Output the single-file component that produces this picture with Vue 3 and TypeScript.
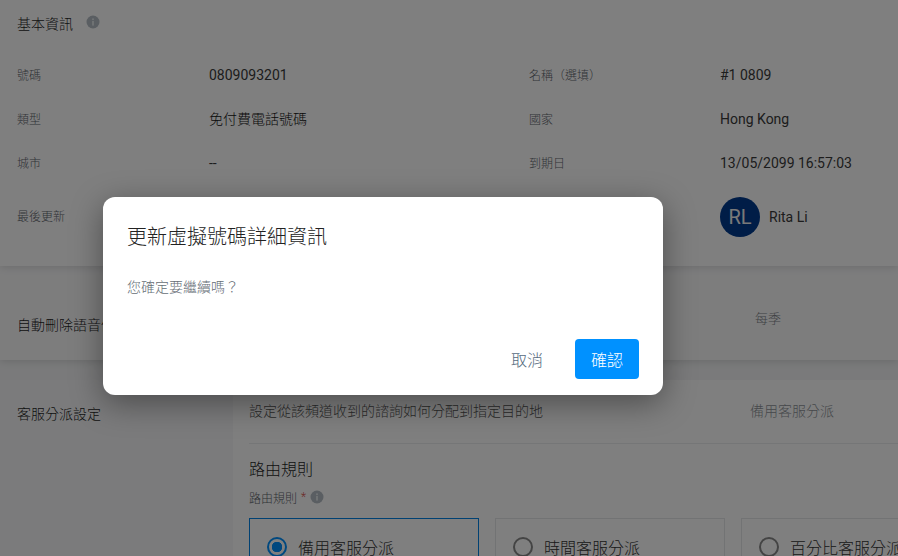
<script setup lang="ts">
interface InfoRow {
  label: string
  value: string
  label2: string
  value2: string
}
const rows: InfoRow[] = [
  { label: '號碼', value: '0809093201', label2: '名稱（選填）', value2: '#1 0809' },
  { label: '類型', value: '免付費電話號碼', label2: '國家', value2: 'Hong Kong' },
  { label: '城市', value: '--', label2: '到期日', value2: '13/05/2099 16:57:03' }
]
const options: { text: string; active: boolean }[] = [
  { text: '備用客服分派', active: true },
  { text: '時間客服分派', active: false },
  { text: '百分比客服分派', active: false }
]
const isCjk = (s: string): boolean => /[\u4e00-\u9fff]/.test(s)
</script>

<template>
  <div class="page">
    <section class="info">
      <div class="info-head">
        <h2>基本資訊</h2>
        <svg class="tip" viewBox="0 0 14 14" width="14" height="14"><circle cx="7" cy="7" r="6.5" fill="#b4bcc4" /><rect x="6.1" y="6" width="1.8" height="4.6" fill="#e4e8ec" /><rect x="6.1" y="3.4" width="1.8" height="1.7" fill="#e4e8ec" /></svg>
      </div>
      <div v-for="r in rows" :key="r.label" class="row">
        <span class="label">{{ r.label }}</span>
        <span class="value" :class="{ cjk: isCjk(r.value) }">{{ r.value }}</span>
        <span class="label">{{ r.label2 }}</span>
        <span class="value">{{ r.value2 }}</span>
      </div>
      <div class="row row-user">
        <span class="label updated">最後更新</span>
        <span class="value"></span>
        <span class="label"></span>
        <span class="user"><span class="avatar">RL</span><span class="value">Rita Li</span></span>
      </div>
    </section>

    <section class="band">
      <span class="band-title">自動刪除語音信箱</span>
      <span class="band-value">每季</span>
    </section>

    <section class="dispatch">
      <div class="side">客服分派設定</div>
      <div class="panel">
        <div class="desc">
          <span class="desc-text">設定從該頻道收到的諮詢如何分配到指定目的地</span>
          <span class="desc-value">備用客服分派</span>
        </div>
        <h3>路由規則</h3>
        <div class="field">
          路由規則 <i>*</i>
          <svg class="tip" viewBox="0 0 14 14" width="14" height="14"><circle cx="7" cy="7" r="6.5" fill="#b4bcc4" /><rect x="6.1" y="6" width="1.8" height="4.6" fill="#e4e8ec" /><rect x="6.1" y="3.4" width="1.8" height="1.7" fill="#e4e8ec" /></svg>
        </div>
        <div class="options">
          <div v-for="o in options" :key="o.text" class="option" :class="{ on: o.active }">
            <span class="radio"></span>
            <span>{{ o.text }}</span>
          </div>
        </div>
      </div>
    </section>

    <div class="overlay">
      <div class="dialog">
        <div class="title">更新虛擬號碼詳細資訊</div>
        <p class="msg">您確定要繼續嗎？</p>
        <div class="actions">
          <button class="cancel">取消</button>
          <button class="ok">確認</button>
        </div>
      </div>
    </div>
  </div>
</template>

<style scoped>
.page {
  position: relative;
  width: 898px;
  height: 556px;
  overflow: hidden;
  background: #f4f5f6;
  font-family: Roboto, "Noto Sans CJK TC", sans-serif;
  font-size: 14px;
  color: #333;
  text-spacing-trim: space-all;
}
.info {
  position: relative;
  z-index: 2;
  height: 266px;
  padding-left: 17px;
  box-sizing: border-box;
  background: #fff;
  box-shadow: 0 1px 8px rgba(0, 0, 0, 0.14);
}
.info-head {
  display: flex;
  align-items: center;
  gap: 13px;
  height: 53px;
  padding-bottom: 8px;
  box-sizing: border-box;
}
.info-head .tip {
  margin-top: -1px;
}
h2 {
  margin: 0;
  font-size: 14px;
  font-weight: 300;
  color: #1f1f1f;
}
.row {
  display: grid;
  grid-template-columns: 192px 320px 191px 1fr;
  align-items: center;
  height: 44px;
}
.row-user {
  height: 44px;
  margin-top: 10px;
}
.label {
  margin-top: -2px;
  font-size: 12px;
  font-weight: 300;
  color: #5f666d;
}
.updated {
  align-self: center;
  margin-top: -4px;
}
.value {
  font-size: 14px;
  color: #3a3a3a;
}
.value.cjk {
  margin-top: -2px;
  font-weight: 300;
  color: #111;
}
.user {
  display: flex;
  align-items: center;
  gap: 9px;
}
.avatar {
  display: flex;
  align-items: center;
  justify-content: center;
  width: 40px;
  height: 40px;
  border-radius: 50%;
  background: #003a8f;
  color: #f2f2f2;
  font-size: 20px;
}
.band {
  position: relative;
  z-index: 1;
  display: flex;
  align-items: center;
  height: 94px;
  padding-left: 17px;
  box-sizing: border-box;
  margin-bottom: 20px;
  background: #fafafb;
  box-shadow: 0 1px 8px rgba(0, 0, 0, 0.14);
  font-weight: 300;
}
.band-title {
  width: 738px;
  padding-top: 21px;
  color: #1f1f1f;
}
.band-value {
  margin-top: 8px;
  font-size: 13px;
  color: #808489;
}
.dispatch {
  display: flex;
  background: #f6f7f8;
  font-weight: 300;
}
.side {
  width: 233px;
  flex: none;
  padding: 23px 0 0 17px;
  box-sizing: border-box;
  color: #1f1f1f;
}
.panel {
  flex: 1;
  min-width: 0;
  padding: 0 0 0 16px;
  background: #fff;
}
.desc {
  display: flex;
  height: 64px;
  padding-top: 20px;
  box-sizing: border-box;
  border-bottom: 1px solid #eaecee;
  color: #555;
}
.desc-text {
  width: 501px;
}
.desc-value {
  color: #8e9398;
}
h3 {
  margin: 14px 0 0;
  font-size: 16px;
  line-height: 24px;
  font-weight: 300;
  color: #1f1f1f;
}
.field {
  display: flex;
  align-items: center;
  gap: 4px;
  margin-top: 6px;
  height: 18px;
  font-size: 12px;
  color: #5f666d;
}
.field i {
  font-style: normal;
  color: #d9534f;
}
.options {
  display: flex;
  gap: 16px;
  margin-top: 12px;
}
.option {
  flex: none;
  display: flex;
  align-items: center;
  gap: 11px;
  width: 230px;
  height: 56px;
  padding: 2px 0 0 17px;
  box-sizing: border-box;
  border: 1px solid #e4e6e9;
  font-size: 16px;
  color: #333;
}
.option.on {
  border-color: #0083e6;
}
.radio {
  flex: none;
  width: 20px;
  height: 20px;
  box-sizing: border-box;
  border: 2px solid #888;
  border-radius: 50%;
}
.on .radio {
  border-color: #0091ff;
  background: radial-gradient(circle, #0091ff 0 5px, transparent 5.5px);
}
.overlay {
  position: absolute;
  z-index: 3;
  inset: 0;
  padding: 197px 0 0 103px;
  box-sizing: border-box;
  background: rgba(0, 0, 0, 0.5);
}
.dialog {
  display: flex;
  flex-direction: column;
  width: 560px;
  height: 198px;
  box-sizing: border-box;
  padding: 24px 24px 16px 24px;
  border-radius: 12px;
  background: #fff;
  box-shadow: 0 8px 32px rgba(0, 0, 0, 0.4);
}
.title {
  font-size: 20px;
  line-height: 32px;
  font-weight: 300;
  color: #222;
}
.msg {
  margin: 24px 0 0;
  font-size: 14px;
  line-height: 20px;
  font-weight: 300;
  color: #666e76;
}
.actions {
  display: flex;
  justify-content: flex-end;
  align-items: center;
  gap: 16px;
  margin-top: auto;
}
button {
  height: 40px;
  border: 0;
  border-radius: 4px;
  font-family: inherit;
  font-size: 16px;
  font-weight: 300;
  padding: 0;
  width: 64px;
}
.cancel {
  background: transparent;
  color: #566a7d;
}
.ok {
  background: #0091ff;
  color: #fff;
}
</style>
